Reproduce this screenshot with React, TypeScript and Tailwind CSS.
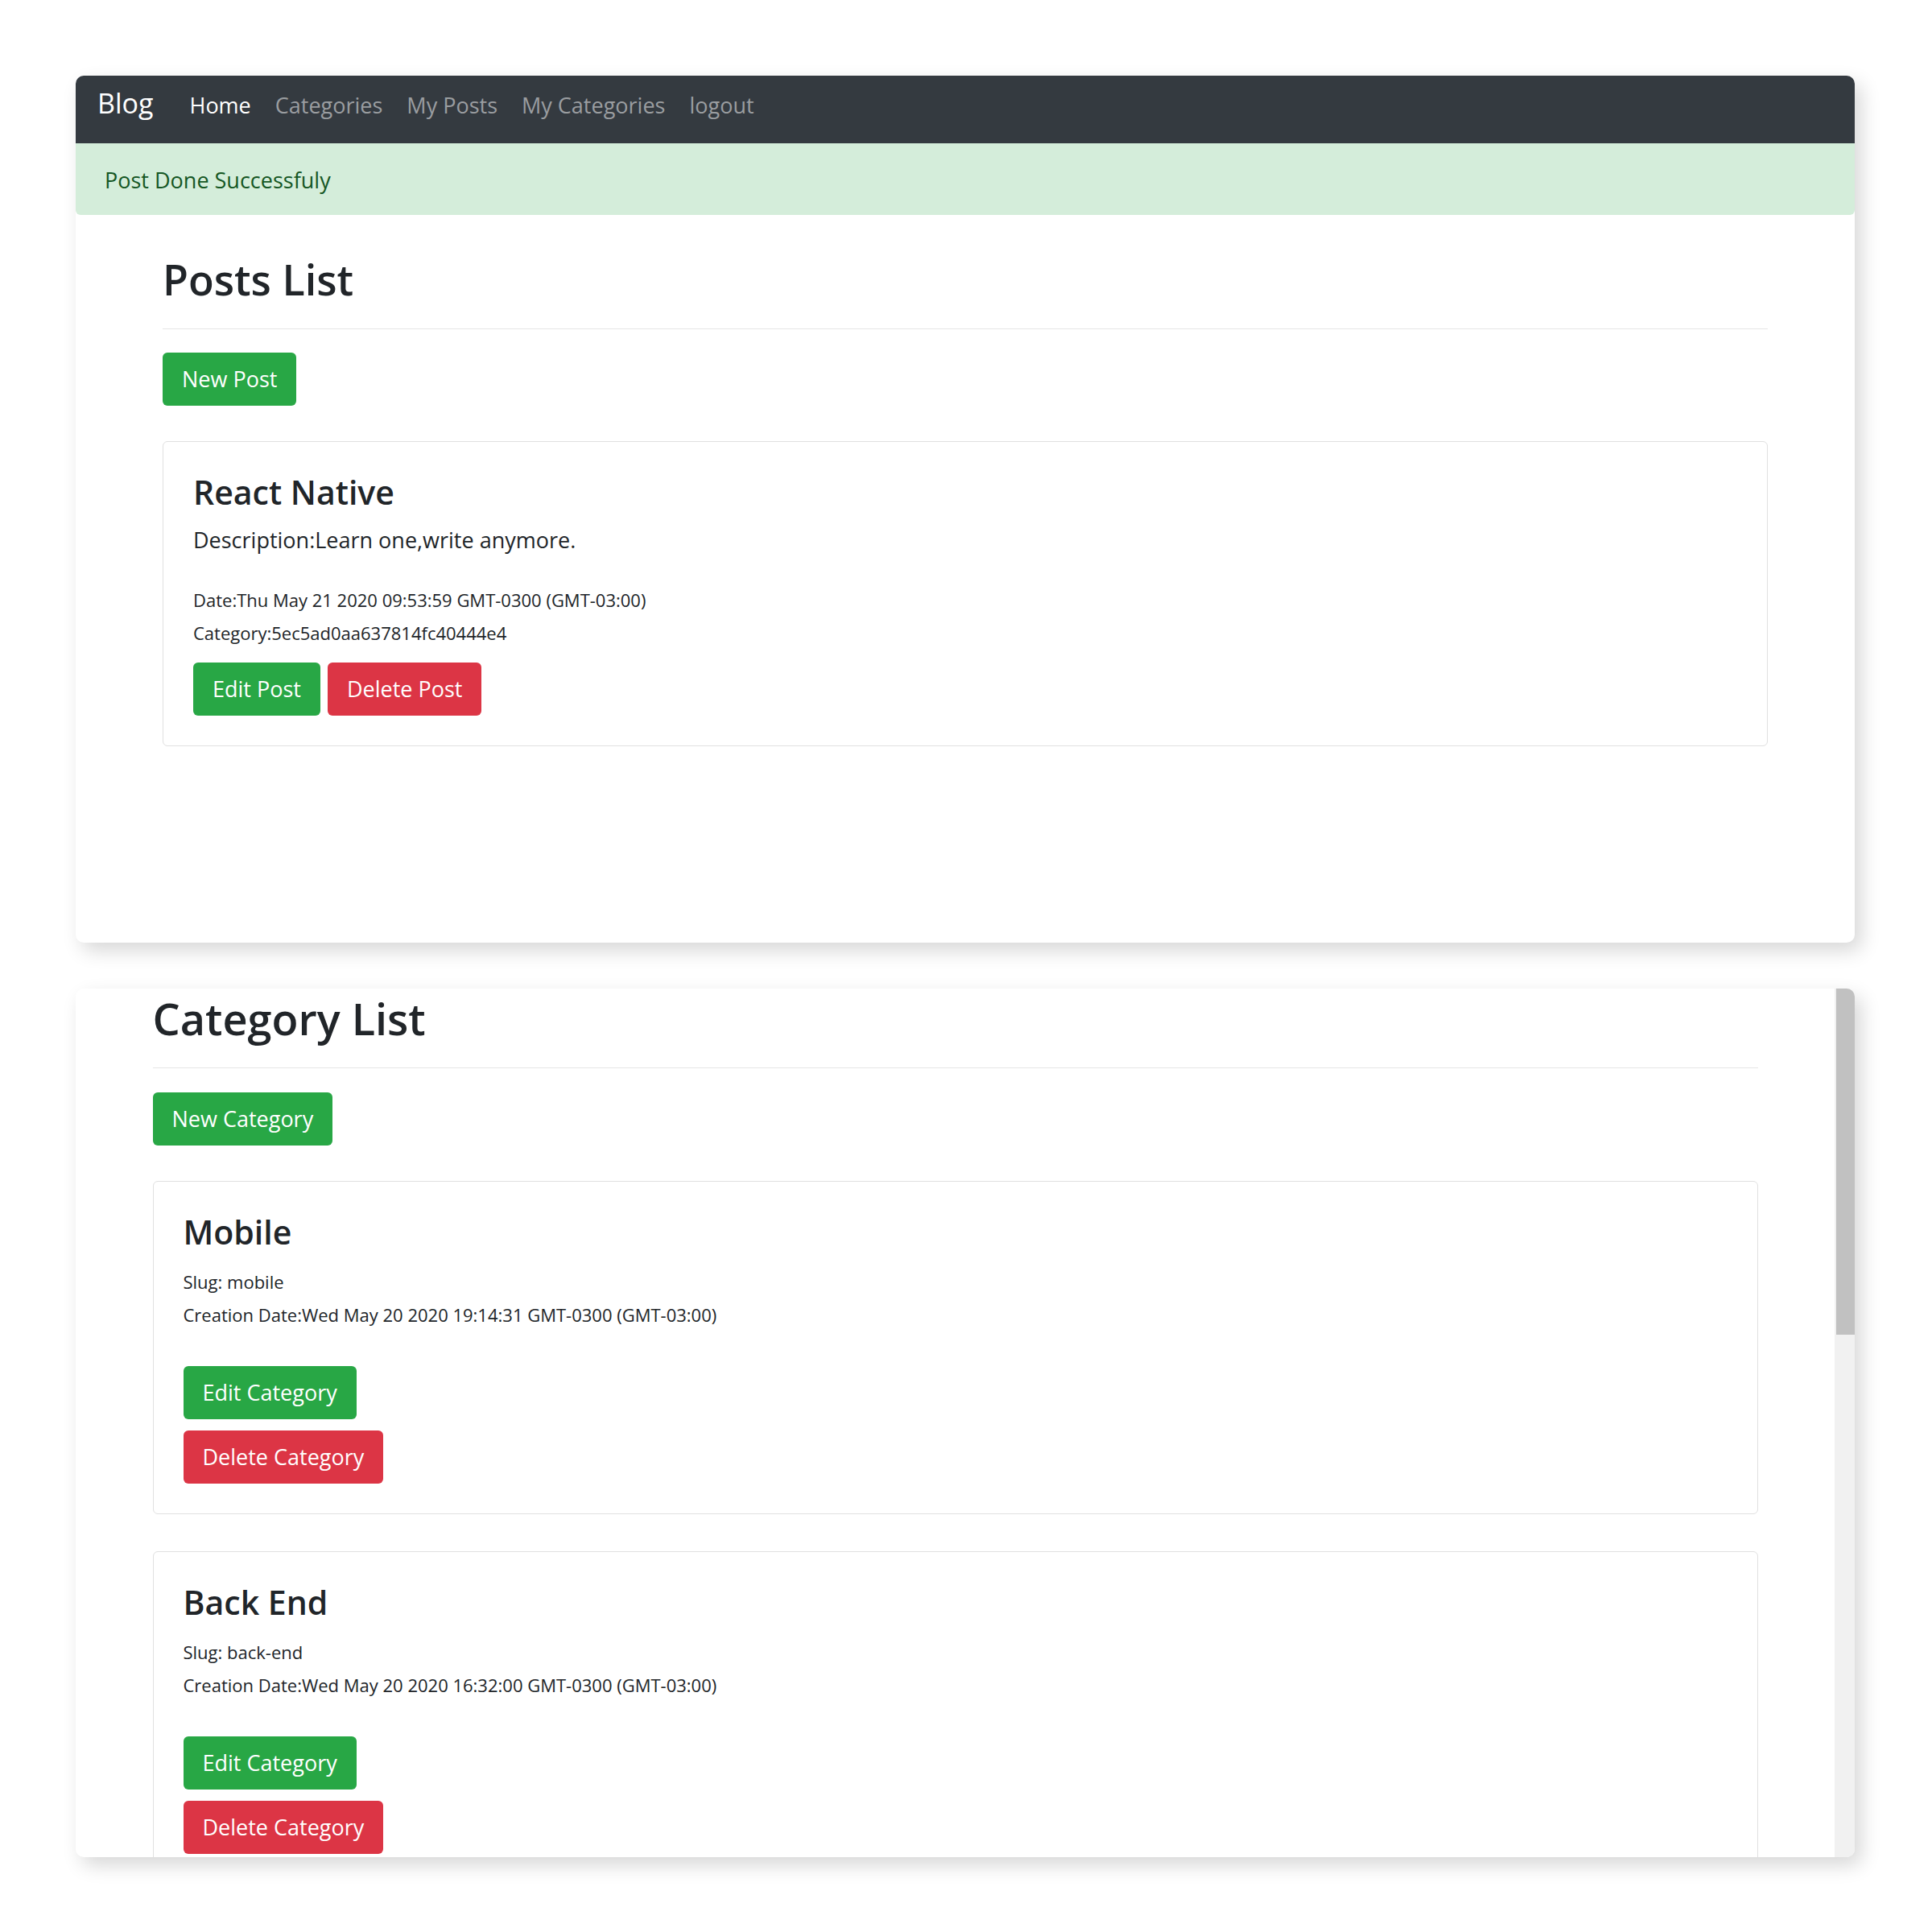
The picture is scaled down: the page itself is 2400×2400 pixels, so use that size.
import React from "react";
import clsx from "clsx";

interface BtnProps {
  variant: "success" | "danger";
  children: React.ReactNode;
}

const Btn: React.FC<BtnProps> = ({ variant, children }) => (
  <button
    className={clsx(
      "rounded-[6px] px-[24px] py-[13px] text-[27px] leading-[40px] text-white",
      variant === "success" ? "bg-[#28a745]" : "bg-[#dc3545]"
    )}
  >
    {children}
  </button>
);

const links = ["Home", "Categories", "My Posts", "My Categories", "logout"];

const Navbar = () => (
  <nav className="flex h-[84px] items-baseline bg-[#343a40] pl-[27px] pt-[9px]">
    <span className="mr-[30px] text-[34px] leading-[51px] text-white">Blog</span>
    {links.map((l, i) => (
      <a
        key={l}
        className={clsx(
          "px-[15px] text-[27px] leading-[40px]",
          i === 0 ? "text-white" : "text-[#9a9da0]"
        )}
      >
        {l}
      </a>
    ))}
  </nav>
);

const PostCard = () => (
  <div className="mt-[44px] rounded-[6px] border border-[#e0e0e0] px-[37px] pt-[37px] pb-[37px]">
    <h3 className="text-[41px] leading-[50px] font-semibold">React Native</h3>
    <p className="mt-[15px] text-[27px] leading-[40px]">Description:Learn one,write anymore.</p>
    <div className="mt-[34px] text-[22px] leading-[41px]">
      Date:Thu May 21 2020 09:53:59 GMT-0300 (GMT-03:00)
    </div>
    <div className="text-[22px] leading-[41px]">Category:5ec5ad0aa637814fc40444e4</div>
    <div className="mt-[16px] flex gap-[9px]">
      <Btn variant="success">Edit Post</Btn>
      <Btn variant="danger">Delete Post</Btn>
    </div>
  </div>
);

interface Category {
  name: string;
  slug: string;
  date: string;
}

const categories: Category[] = [
  { name: "Mobile", slug: "mobile", date: "Wed May 20 2020 19:14:31 GMT-0300 (GMT-03:00)" },
  { name: "Back End", slug: "back-end", date: "Wed May 20 2020 16:32:00 GMT-0300 (GMT-03:00)" },
];

const CategoryCard: React.FC<{ cat: Category; first?: boolean }> = ({ cat, first }) => (
  <div
    className={clsx(
      "rounded-[6px] border border-[#e0e0e0] px-[37px] pt-[37px] pb-[37px]",
      first ? "mt-[44px]" : "mt-[46px]"
    )}
  >
    <h3 className="text-[41px] leading-[50px] font-semibold">{cat.name}</h3>
    <div className="mt-[17px] text-[22px] leading-[41px]">Slug: {cat.slug}</div>
    <div className="text-[22px] leading-[41px]">Creation Date:{cat.date}</div>
    <div className="mt-[43px] flex flex-col items-start gap-[14px]">
      <Btn variant="success">Edit Category</Btn>
      <Btn variant="danger">Delete Category</Btn>
    </div>
  </div>
);

export default function App() {
  return (
    <div className="min-h-[2400px] bg-white pt-[94px] pl-[94px] font-['Open_Sans',sans-serif] text-[#212529]">
      {/* first screenshot: posts page */}
      <div className="flex h-[1077px] w-[2210px] flex-col overflow-hidden rounded-[10px] bg-white shadow-[8px_10px_24px_rgba(0,0,0,0.16)]">
        <Navbar />
        <div className="rounded-b-[6px] bg-[#d4edda] pl-[36px] pt-[26px] pb-[23px] text-[27px] leading-[40px] text-[#155724]">
          Post Done Successfuly
        </div>
        <div className="mx-auto w-[1994px] pt-[47px]">
          <h1 className="text-[52px] leading-[65px] font-semibold">Posts List</h1>
          <hr className="mt-[29px] border-t border-[#e6e6e6]" />
          <div className="mt-[29px]">
            <Btn variant="success">New Post</Btn>
          </div>
          <PostCard />
        </div>
      </div>

      {/* second screenshot: categories page, scrolled down a little */}
      <div className="mt-[57px] flex h-[1079px] w-[2210px] overflow-hidden rounded-[10px] bg-white shadow-[8px_10px_24px_rgba(0,0,0,0.16)]">
        <div className="flex-1 overflow-hidden">
          <div className="mx-auto w-[1994px]">
            <h1 className="text-[54px] leading-[74px] font-semibold">Category List</h1>
            <hr className="mt-[24px] border-t border-[#e6e6e6]" />
            <div className="mt-[30px]">
              <Btn variant="success">New Category</Btn>
            </div>
            {categories.map((c, i) => (
              <CategoryCard key={c.slug} cat={c} first={i === 0} />
            ))}
          </div>
        </div>
        <div className="flex w-[25px] flex-col bg-[#f1f1f1]">
          <div className="ml-[2px] h-[430px] bg-[#c1c1c1]" />
        </div>
      </div>
    </div>
  );
}
